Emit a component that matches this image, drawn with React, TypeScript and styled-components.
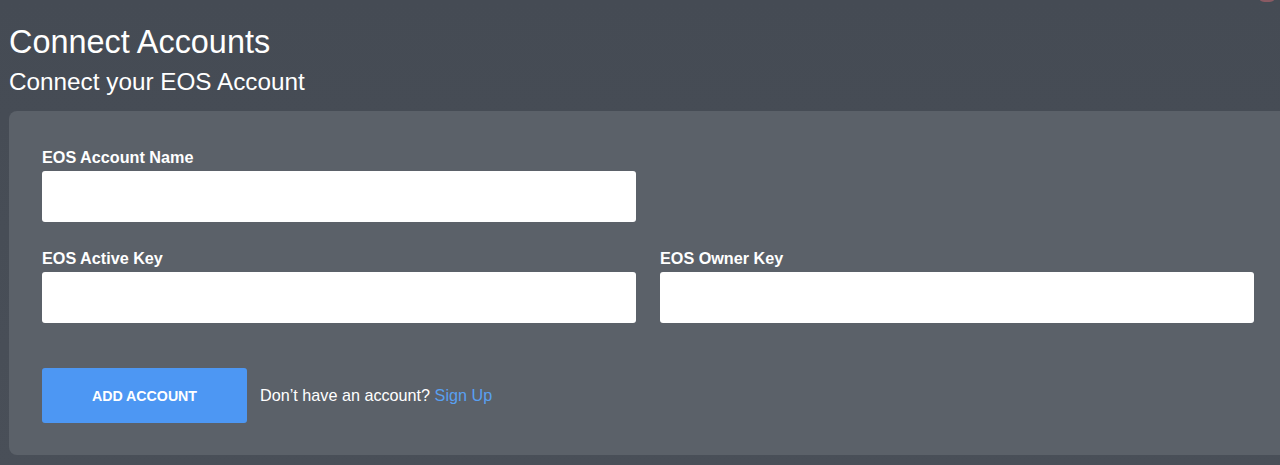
import React from "react";
import styled, { createGlobalStyle } from "styled-components";

const GlobalStyle = createGlobalStyle`
  html, body {
    margin: 0;
    padding: 0;
    overflow: hidden;
  }
  body {
    width: 1280px;
    height: 465px;
    background: linear-gradient(180deg, #454b54 0%, #494f58 100%);
    font-family: "Liberation Sans", Arial, sans-serif;
  }
  * { box-sizing: border-box; }
`;

const Page = styled.div`
  position: relative;
  width: 1280px;
  height: 465px;
  padding: 22px 0 0 9px;
  color: #ffffff;
`;

const Title = styled.h1`
  margin: 0;
  font-size: 32.4px;
  font-weight: 400;
  line-height: 40px;
`;

const Subtitle = styled.h2`
  margin: 5px 0 0 0;
  font-size: 24.3px;
  font-weight: 400;
  line-height: 30px;
`;

const Panel = styled.form`
  margin-top: 14px;
  width: 1278px;
  height: 344px;
  background: #5b6169;
  border-radius: 8px;
  padding: 37px 33px 32px 33px;
  display: flex;
  flex-direction: column;
`;

const Grid = styled.div`
  display: grid;
  grid-template-columns: 594px 594px;
  column-gap: 24px;
  row-gap: 27px;
`;

const Field = styled.div`
  display: flex;
  flex-direction: column;
  gap: 5px;
`;

const Label = styled.label`
  font-size: 16.2px;
  font-weight: 700;
  line-height: 18px;
  color: #ffffff;
`;

const Input = styled.input`
  height: 51px;
  width: 100%;
  border: none;
  border-radius: 3px;
  background: #ffffff;
  padding: 0 12px;
  font-size: 16px;
  font-family: inherit;
  outline: none;
`;

const Actions = styled.div`
  margin-top: 45px;
  display: flex;
  align-items: center;
  gap: 13px;
`;

const Button = styled.button`
  width: 205px;
  height: 55px;
  border: none;
  border-radius: 3px;
  background: #4d97f3;
  color: #ffffff;
  font-family: inherit;
  font-size: 14.2px;
  font-weight: 700;
  cursor: pointer;
`;

const Note = styled.span`
  font-size: 16.2px;
  color: #ffffff;
`;

const Link = styled.a`
  color: #59a0f2;
  text-decoration: none;
`;

const CornerMark = styled.span`
  position: absolute;
  top: -2px;
  right: 6px;
  width: 14px;
  height: 4px;
  border-radius: 50%;
  background: #8a5a63;
`;

export default function App() {
  return (
    <>
      <GlobalStyle />
      <Page>
        <CornerMark />
        <Title>Connect Accounts</Title>
        <Subtitle>Connect your EOS Account</Subtitle>
        <Panel onSubmit={(e) => e.preventDefault()}>
          <Grid>
            <Field>
              <Label>EOS Account Name</Label>
              <Input type="text" />
            </Field>
            <div />
            <Field>
              <Label>EOS Active Key</Label>
              <Input type="text" />
            </Field>
            <Field>
              <Label>EOS Owner Key</Label>
              <Input type="text" />
            </Field>
          </Grid>
          <Actions>
            <Button type="submit">ADD ACCOUNT</Button>
            <Note>
              Don’t have an account? <Link href="#">Sign Up</Link>
            </Note>
          </Actions>
        </Panel>
      </Page>
    </>
  );
}
